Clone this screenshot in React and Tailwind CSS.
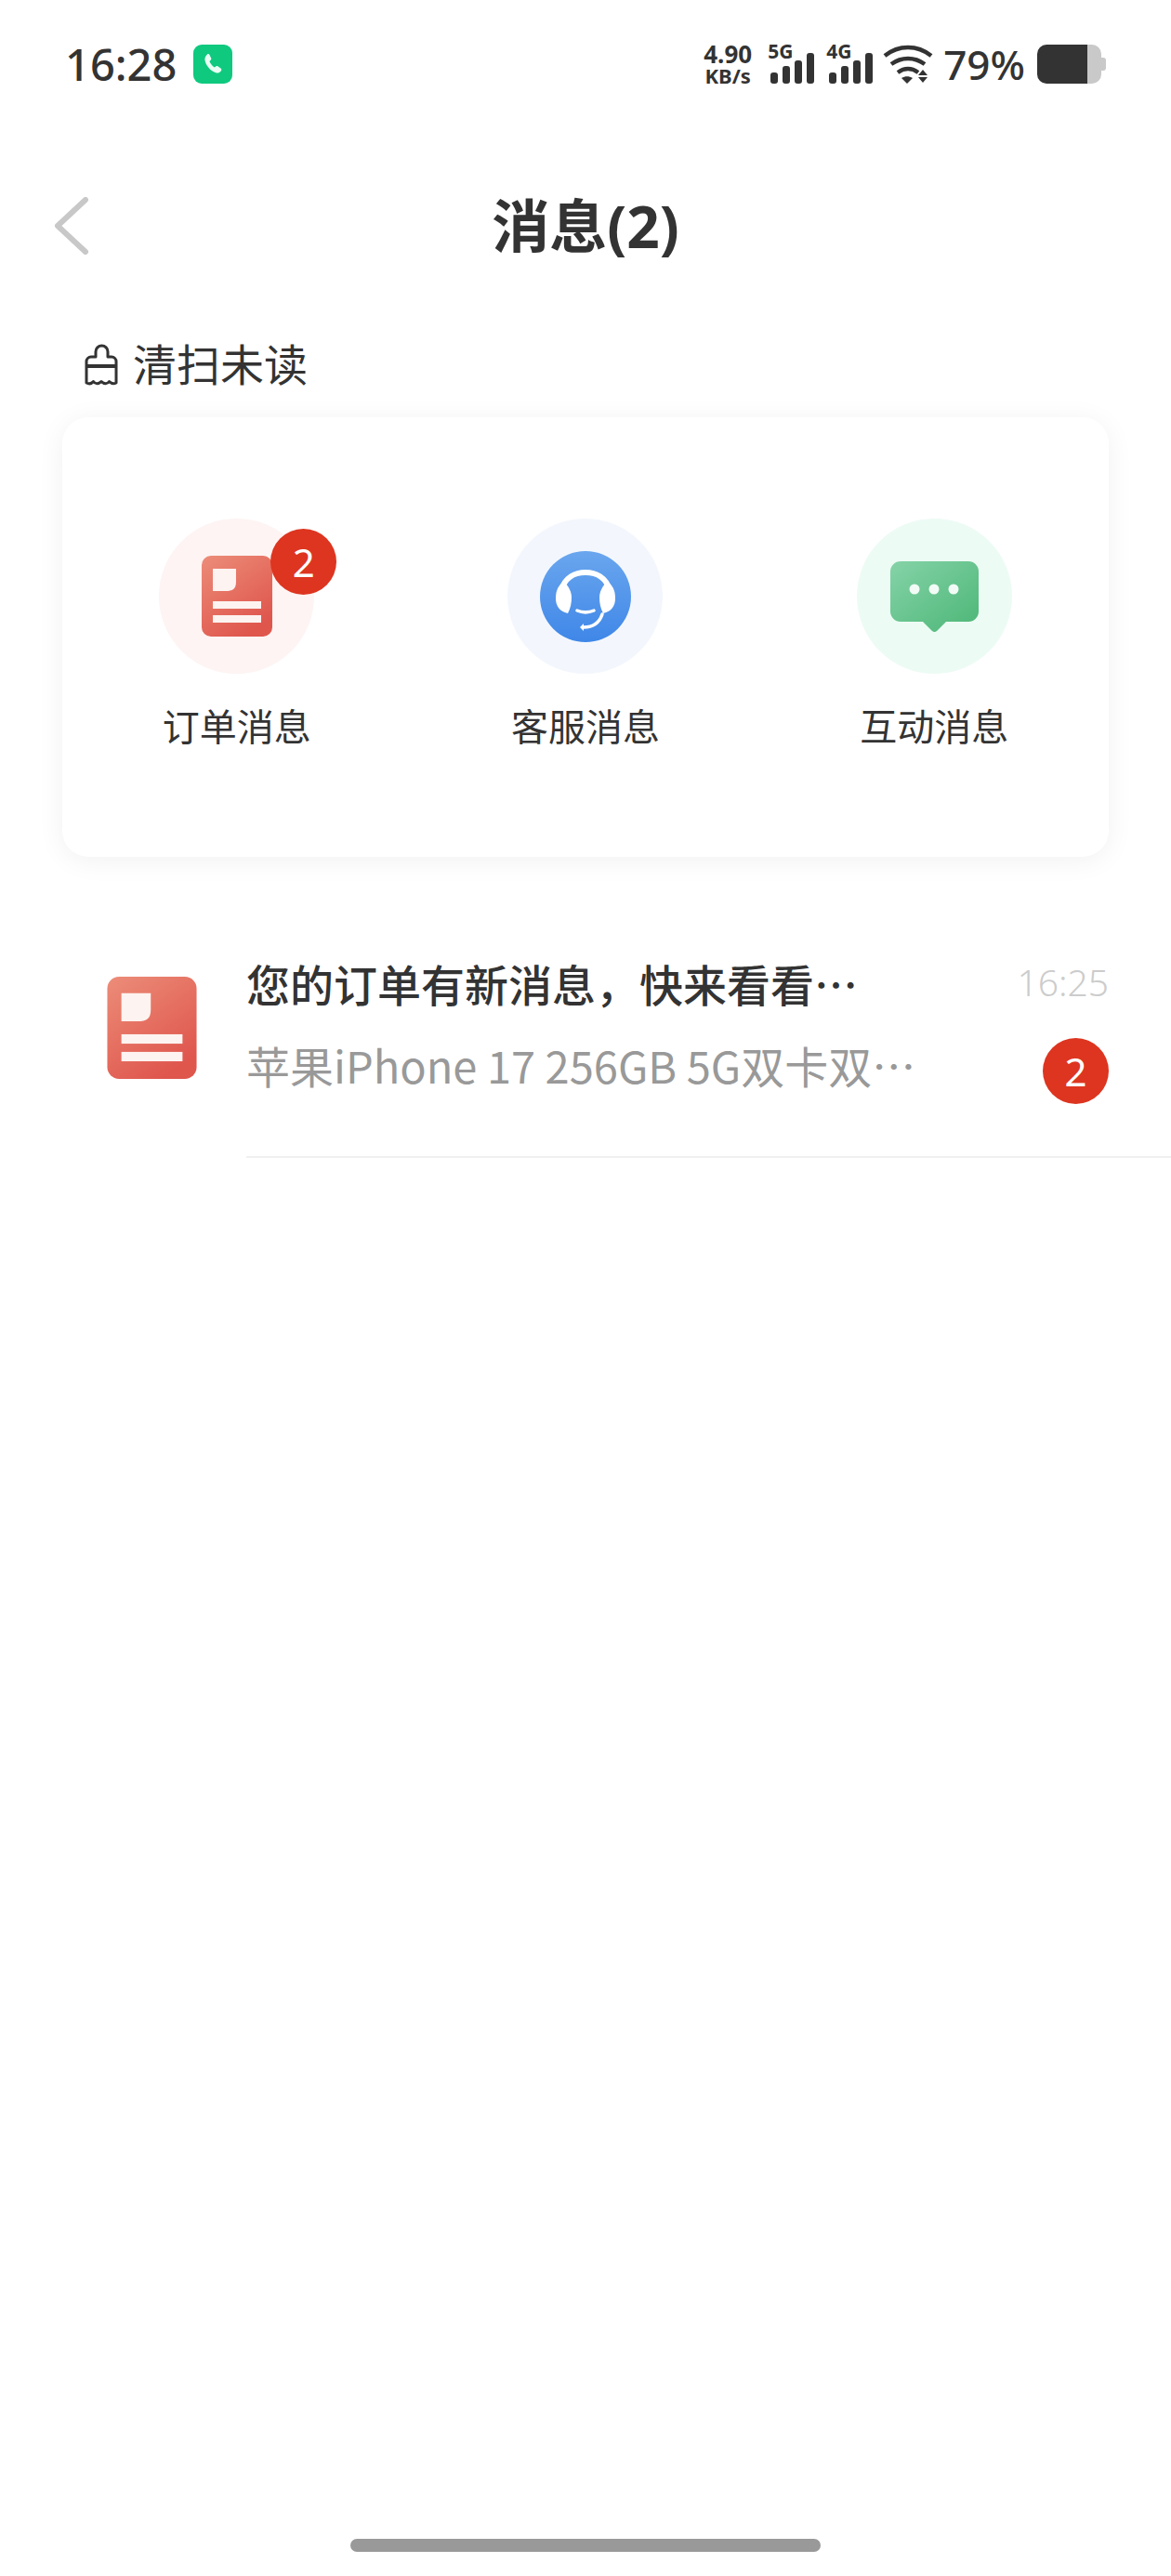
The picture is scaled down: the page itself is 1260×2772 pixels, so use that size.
const FONT = "font-['Noto_Sans','Noto_Sans_CJK_SC',sans-serif]"

function OrderIcon({ id, className }) {
  return (
    <svg viewBox="0 0 76 87" className={className}>
      <defs>
        <linearGradient id={id} x1="0" y1="0" x2="0.6" y2="1">
          <stop offset="0" stopColor="#ec8d79" />
          <stop offset="1" stopColor="#df564d" />
        </linearGradient>
      </defs>
      <rect width="76" height="87" rx="10" fill={`url(#${id})`} />
      <path d="M12 14h25v14c0 8-4 10-11 10H12z" fill="#fdf3f0" />
      <rect x="12" y="49" width="52" height="8" fill="#fdf3f0" />
      <rect x="12" y="64" width="52" height="8" fill="#fdf3f0" />
    </svg>
  )
}

function HeadsetIcon() {
  return (
    <svg viewBox="0 0 98 98" className="w-[98px] h-[98px]">
      <defs>
        <linearGradient id="headset" x1="0" y1="0" x2="0" y2="1">
          <stop offset="0" stopColor="#6aa6ee" />
          <stop offset="1" stopColor="#3f87e8" />
        </linearGradient>
      </defs>
      <circle cx="49" cy="49" r="49" fill="url(#headset)" />
      <path d="M23 42C27 28 38 23 49 23s22 5 26 19" fill="none" stroke="#fff" strokeWidth="6" />
      <path d="M26 33c-6 3-9 9-9 18 0 8 4 14 13 16 3-6 4-11 4-17 0-6-3-12-8-17z" fill="#fff" />
      <path d="M72 33c6 3 9 9 9 18 0 8-4 14-13 16-3-6-4-11-4-17 0-6 3-12 8-17z" fill="#fff" />
      <path d="M40 64c6 2.5 12 2.5 18 0" fill="none" stroke="#fff" strokeWidth="3.5" strokeLinecap="round" />
      <path d="M67 68c-3 9-10 14-20 14" fill="none" stroke="#fff" strokeWidth="3.5" strokeLinecap="round" />
      <path d="M47 78l-4 4 4 4z" fill="#fff" />
    </svg>
  )
}

function BubbleIcon() {
  return (
    <svg viewBox="0 0 95 76" className="w-[95px] h-[76px]">
      <defs>
        <linearGradient id="bubble" x1="0" y1="0" x2="1" y2="1">
          <stop offset="0" stopColor="#85d3a8" />
          <stop offset="1" stopColor="#4cb676" />
        </linearGradient>
      </defs>
      <path d="M11 0h73a11 11 0 0 1 11 11v43a11 11 0 0 1-11 11H60L50 75a4 4 0 0 1-5 0L35 65H11A11 11 0 0 1 0 54V11A11 11 0 0 1 11 0z" fill="url(#bubble)" />
      <circle cx="26" cy="30" r="5.5" fill="#f2fbf6" />
      <circle cx="47" cy="30" r="5.5" fill="#f2fbf6" />
      <circle cx="68" cy="30" r="5.5" fill="#f2fbf6" />
    </svg>
  )
}

function Signal({ label }) {
  return (
    <div className="relative w-[50px] h-[42px]">
      <span className="absolute left-0 top-[-4px] text-[21px] leading-[22px] font-bold text-[#333]">{label}</span>
      <svg viewBox="0 0 50 42" className="w-[50px] h-[42px]">
        <rect x="3" y="30" width="8" height="12" rx="3" fill="#333" />
        <rect x="16" y="23" width="8" height="19" rx="3" fill="#333" />
        <rect x="29" y="17" width="8" height="25" rx="3" fill="#333" />
        <rect x="42" y="9" width="8" height="33" rx="3" fill="#333" />
      </svg>
    </div>
  )
}

function Wifi() {
  return (
    <svg viewBox="0 0 54 42" className="w-[54px] h-[42px]">
      <g fill="none" stroke="#333" strokeWidth="4.5">
        <path d="M2 12c15-12 35-12 50 0" />
        <path d="M9 21c11-8 25-8 36 0" />
        <path d="M16 30c7-5 15-5 22 0" />
      </g>
      <path d="M20 36c4-2.5 8-2.5 12 0l-6 6z" fill="#333" />
      <path d="M43 27l5 6H38zM38 35h10l-5 6z" fill="#333" />
    </svg>
  )
}

function Battery() {
  return (
    <div className="flex items-center">
      <div className="flex w-[69px] h-[42px] rounded-[10px] overflow-hidden">
        <div className="w-[54px] bg-[#333]" />
        <div className="flex-1 bg-[#c9c9c9]" />
      </div>
      <div className="w-[5px] h-[14px] rounded-r-[3px] bg-[#c9c9c9]" />
    </div>
  )
}

function StatusBar() {
  return (
    <div className="h-[138px] pl-[70px] pr-[70px] flex items-center justify-between text-[#333]">
      <div className="flex items-center">
        <span className="text-[47px] leading-none font-medium">16:28</span>
        <div className="ml-[18px] w-[42px] h-[42px] rounded-[9px] bg-[#0fc97f] flex items-center justify-center">
          <svg viewBox="0 0 24 24" className="w-[30px] h-[30px]">
            <path d="M7.2 3.5c.8-.5 1.700-.2 2.100.6l1.200 2.600c.3.700.1 1.400-.4 1.900l-1 .9c.8 1.900 2.400 3.900 4.300 5.200l1.200-.8c.6-.4 1.300-.4 1.900 0l2.300 1.600c.7.500.9 1.500.3 2.200-1 1.200-2.500 2.200-4 1.800-5.300-1.500-9.300-6.500-10-11.300-.2-1.800 1-3.600 2.100-4.700z" fill="#eafff4" />
          </svg>
        </div>
      </div>
      <div className="flex items-center">
        <div className="flex flex-col items-center w-[54px] font-bold">
          <span className="text-[26px] leading-[24px]">4.90</span>
          <span className="text-[22px] leading-[22px]">KB/s</span>
        </div>
        <div className="flex ml-[16px] gap-[13px]">
          <Signal label="5G" />
          <Signal label="4G" />
        </div>
        <div className="ml-[11px]">
          <Wifi />
        </div>
        <span className="ml-[11px] text-[44px] leading-none font-medium">79%</span>
        <div className="ml-[13px]">
          <Battery />
        </div>
      </div>
    </div>
  )
}

function Entry({ bg, label, badge, children }) {
  return (
    <div className="flex flex-col items-center">
      <div className={`relative w-[167px] h-[167px] rounded-full ${bg} flex items-center justify-center`}>
        {children}
        {badge && (
          <span className="absolute left-[120px] top-[11px] w-[71px] h-[71px] rounded-full bg-[#dd3520] text-white text-[42px] leading-none flex items-center justify-center">
            {badge}
          </span>
        )}
      </div>
      <span className="mt-[32px] text-[40px] leading-[50px] text-[#333]">{label}</span>
    </div>
  )
}

export default function App() {
  return (
    <div lang="zh-CN" className={`${FONT} min-h-[2772px] bg-white flex flex-col`}>
      <StatusBar />

      {/* header */}
      <div className="h-[212px] relative flex items-center justify-center">
        <svg viewBox="0 0 38 62" className="absolute left-[58px] top-[74px] w-[38px] h-[62px]">
          <path d="M34 3L4 31l30 28" fill="none" stroke="#c8c8c8" strokeWidth="6" strokeLinecap="round" strokeLinejoin="round" />
        </svg>
        <span className="text-[62px] leading-none font-bold text-[#333] mt-[-3px]">消息(2)</span>
      </div>

      <div className="h-[84px] pl-[90px] flex items-center gap-[15px]">
        <svg viewBox="0 0 38 46" className="w-[38px] h-[46px]">
          <path d="M13 15V9.500a6.500 6.500 0 0 1 13 0V15h4a5 5 0 0 1 5 5v23c-3 1.500-5 1-7.500-1.500-2 3-5.500 3-8.500 0-3 3-6.500 3-8.500 0C8.500 44 6 44.500 3 43V20a5 5 0 0 1 5-5z" fill="none" stroke="#333" strokeWidth="3" strokeLinejoin="round" />
          <path d="M3 25h32" fill="none" stroke="#333" strokeWidth="4" />
        </svg>
        <span className="text-[47px] leading-none text-[#333]">清扫未读</span>
      </div>

      {/* card */}
      <div className="mt-[15px] mx-[67px] h-[473px] pt-[109px] rounded-[28px] bg-white shadow-[0_4px_30px_rgba(0,0,0,0.06)] grid grid-cols-3 content-start">
        <Entry bg="bg-[#fdf4f3]" label="订单消息" badge="2">
          <OrderIcon id="order-a" className="w-[76px] h-[87px]" />
        </Entry>
        <Entry bg="bg-[#f3f7fd]" label="客服消息">
          <HeadsetIcon />
        </Entry>
        <Entry bg="bg-[#edfbf5]" label="互动消息">
          <BubbleIcon />
        </Entry>
      </div>

      {/* list */}
      <div className="mt-[78px] flex">
        <div className="w-[265px] pl-[115px] pt-[51px]">
          <OrderIcon id="order-b" className="w-[97px] h-[110px]" />
        </div>
        <div className="flex-1 h-[246px] pr-[67px] border-b-2 border-[#f0f0f0] flex justify-between">
          <div className="pt-[30px] flex flex-col gap-[32px]">
            <span className="text-[47px] leading-[56px] text-[#333] font-medium font-['Noto_Sans_CJK_SC',sans-serif]">您的订单有新消息，快来看看…</span>
            <span className="text-[47px] leading-[56px] text-[#999] font-['Noto_Sans_CJK_SC',sans-serif]">苹果iPhone 17 256GB 5G双卡双…</span>
          </div>
          <div className="pt-[33px] flex flex-col items-end">
            <span className="text-[39px] leading-[48px] font-light text-[#ccc]">16:25</span>
            <span className="mt-[36px] w-[71px] h-[71px] rounded-full bg-[#dd3520] text-white text-[42px] leading-none flex items-center justify-center">2</span>
          </div>
        </div>
      </div>

      <div className="mt-auto mb-[26px] mx-auto w-[506px] h-[14px] rounded-full bg-[#999]" />
    </div>
  )
}
